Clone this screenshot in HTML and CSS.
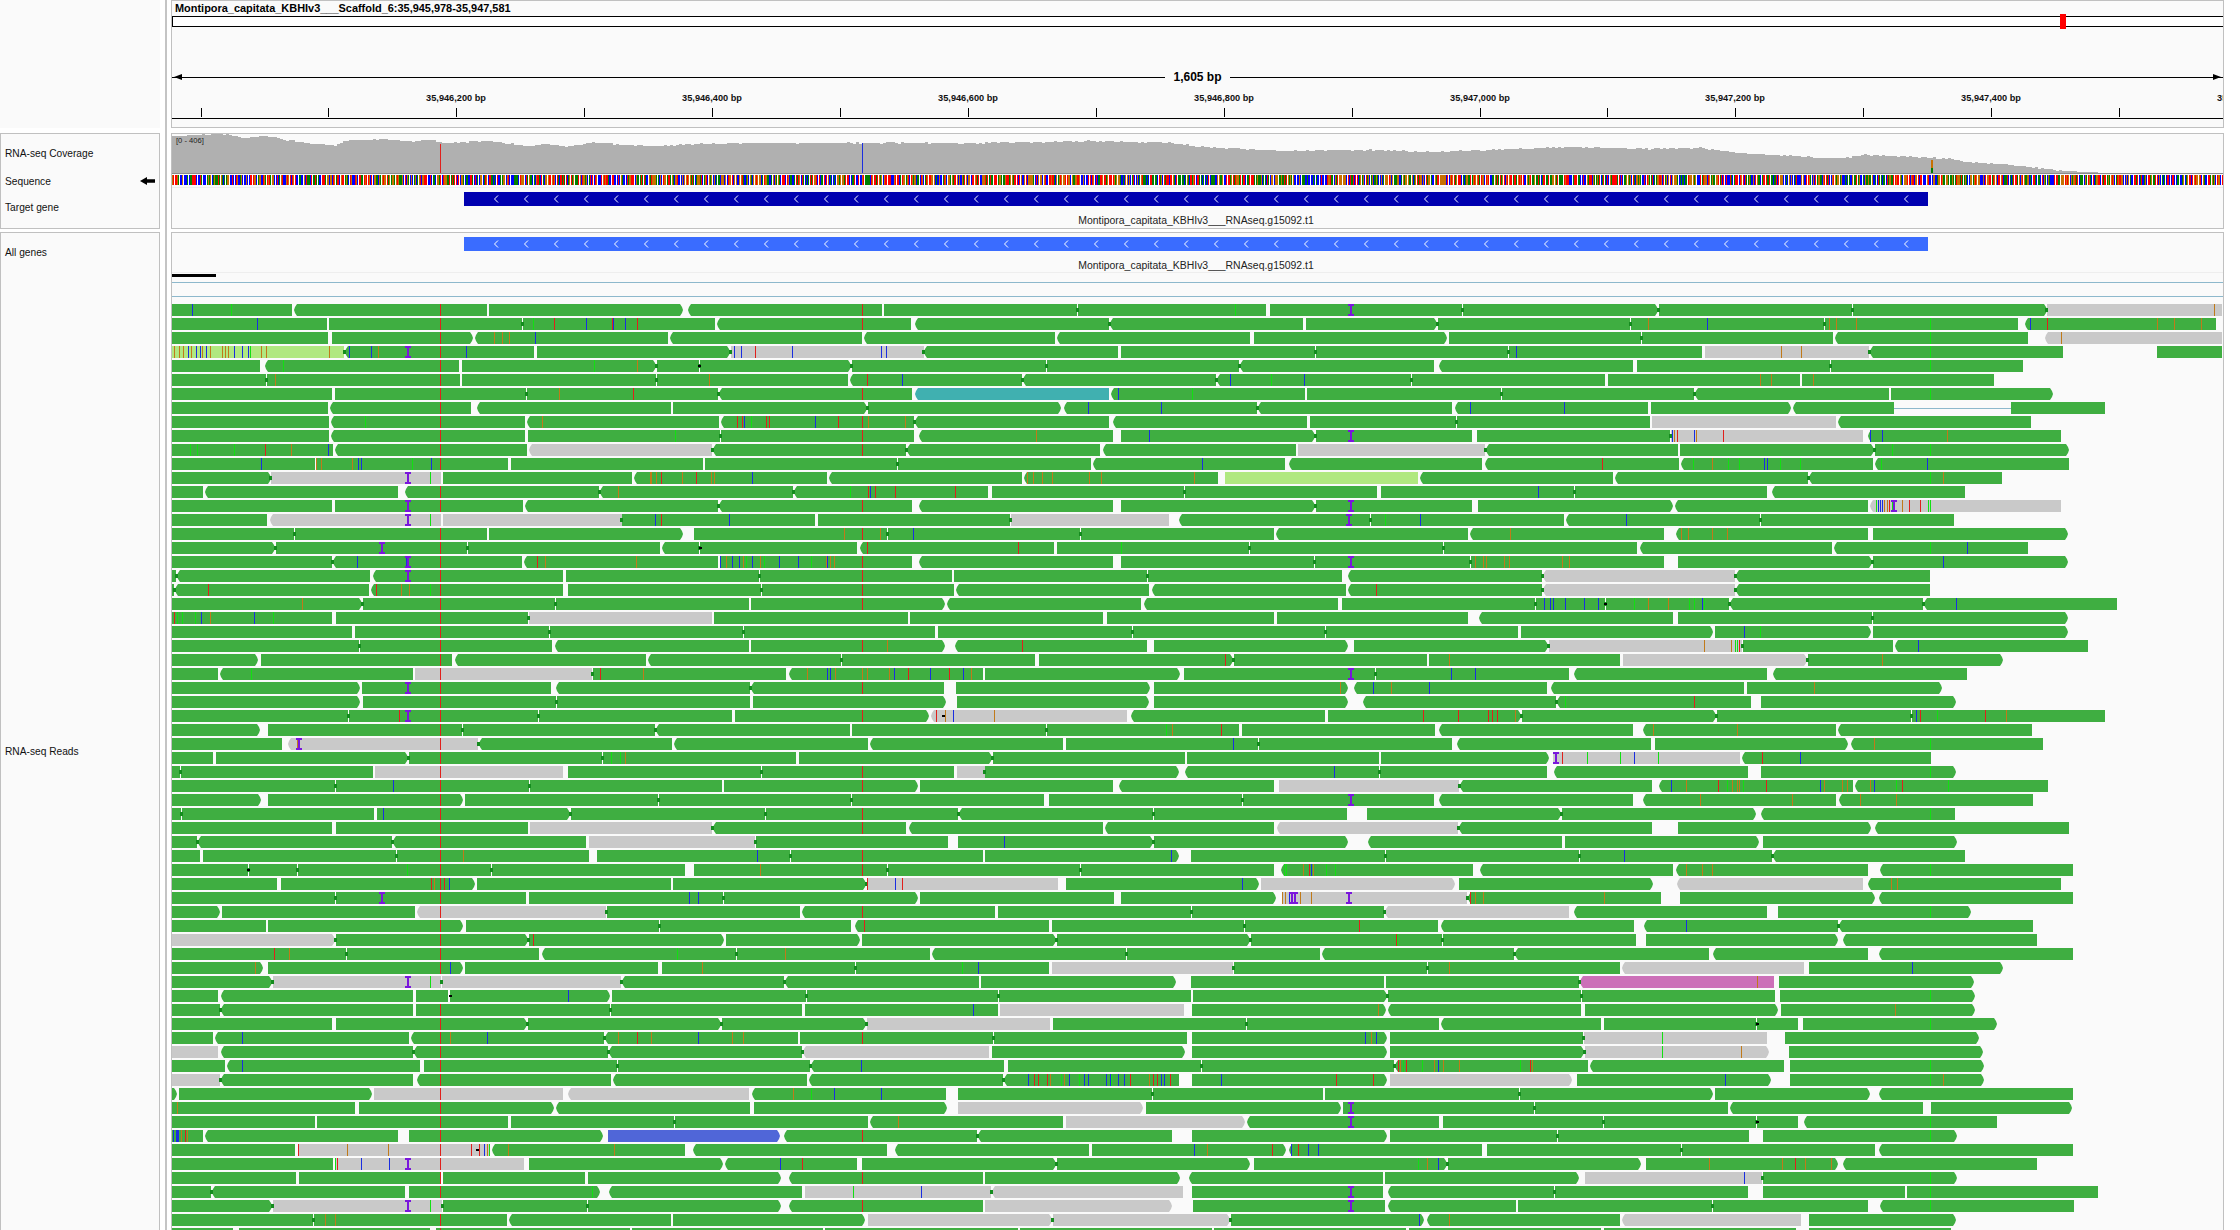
FILE: index.html
```html
<!DOCTYPE html>
<html lang="en">

<head>
    <meta charset="UTF-8">
    <title>IGV</title>
    <link rel="stylesheet" href="styles.css">
</head>

<body>
    <div class="app">
        <div class="names">
            <div class="name-head"></div>
            <div class="name-box track-names">
                <div class="name">RNA-seq Coverage</div>
                <div class="name name-seq">
                    <span>Sequence</span>
                    <svg class="seq-arrow" width="15" height="8" viewBox="0 0 15 8">
                        <path d="M0 4 L7 0 L7 2.3 L15 2.3 L15 5.7 L7 5.7 L7 8 Z" fill="#000" />
                    </svg>
                </div>
                <div class="name">Target gene</div>
            </div>
            <div class="name-box feature-names">
                <div class="name">All genes</div>
                <div class="name name-reads">RNA-seq Reads</div>
            </div>
        </div>

        <div class="divider"></div>

        <div class="panels">
            <div class="panel panel-head">
                <div class="locus">Montipora_capitata_KBHIv3___Scaffold_6:35,945,978-35,947,581</div>
                <div class="ideogram"><div class="cytoband"></div></div>
                <div class="span">
                    <div class="span-line span-left"></div>
                    <div class="span-text">1,605 bp</div>
                    <div class="span-line span-right"></div>
                </div>
                <div class="ruler" id="ruler"></div>
            </div>

            <div class="panel panel-tracks">
                <div class="coverage" id="coverage">
                    <div class="range">[0 - 406]</div>
                </div>
                <div class="coverage-base"></div>
                <div class="sequence" id="sequence"></div>
                <div class="soft-line"></div>
                <div class="gene gene-target">
                    <svg width="1464" height="14">
                        <defs>
                            <pattern id="chevrons" x="29" y="0" width="30" height="14" patternUnits="userSpaceOnUse">
                                <path d="M5 3.5 L1.5 7 L5 10.5" fill="none" stroke="#fff" stroke-width="1" />
                            </pattern>
                        </defs>
                        <rect x="29" y="0" width="1416" height="14" fill="url(#chevrons)" />
                    </svg>
                </div>
                <div class="gene-label">Montipora_capitata_KBHIv3___RNAseq.g15092.t1</div>
            </div>

            <div class="panel panel-reads">
                <div class="gene gene-all">
                    <svg width="1464" height="14">
                        <rect x="29" y="0" width="1416" height="14" fill="url(#chevrons)" />
                    </svg>
                </div>
                <div class="gene-label">Montipora_capitata_KBHIv3___RNAseq.g15092.t1</div>
                <div class="soft-line soft-line-all"></div>
                <div class="scale-bar"></div>
                <div class="blue-line"></div>
                <div class="blue-line blue-line-2"></div>
                <div class="reads" id="reads"></div>
            </div>
        </div>
    </div>
    <script src="reads.js"></script>
</body>

</html>
```

FILE: styles.css
```css
html,
body {
    margin: 0;
    background-color: #fff;
}

body {
    font-family: "Liberation Sans", Arial, sans-serif;
    color: #111;
}

.app {
    display: flex;
    width: 2240px;
    height: 1230px;
    overflow: hidden;
}

/* left column with track names */
.names {
    width: 160px;
    flex: none;
}

.name-head {
    height: 128px;
    margin-bottom: 5px;
    background-color: #fafafa;
}

.name-box {
    box-sizing: border-box;
    border: 1px solid #c0c0c0;
    background-color: #fafafa;
    padding-left: 4px;
}

.track-names {
    height: 96px;
    margin-bottom: 3px;
    padding-top: 13px;
}

.feature-names {
    height: 1100px;
    padding-top: 13px;
}

.name {
    font-size: 10.2px;
    line-height: 14px;
    margin-bottom: 13px;
}

.name-seq {
    display: flex;
    align-items: center;
    justify-content: space-between;
    padding-right: 4px;
}

.name-seq span {
    position: relative;
    top: 1px;
}

.name-reads {
    margin-top: 485px;
}

.divider {
    width: 2px;
    flex: none;
    margin: 0 4px 0 5px;
    background-color: #c4c4c4;
}

/* right column */
.panels {
    width: 2053px;
    flex: none;
}

.panel {
    box-sizing: border-box;
    border: 1px solid #c0c0c0;
    background-color: #fafafa;
}

.panel-head {
    height: 128px;
    margin-bottom: 5px;
}

.panel-tracks {
    height: 96px;
    margin-bottom: 3px;
}

.panel-reads {
    height: 1100px;
    padding-top: 4px;
}

.locus {
    font-size: 10.95px;
    font-weight: bold;
    line-height: 14px;
    padding-left: 3px;
    color: #000;
    white-space: nowrap;
}

.ideogram {
    position: relative;
    height: 9px;
    margin-top: 1px;
    background-color: #fff;
    border-top: 1px solid #000;
    border-bottom: 1px solid #000;
    border-left: 1px solid #000;
}

.cytoband {
    position: absolute;
    left: 1887px;
    top: -3px;
    width: 6px;
    height: 15px;
    background-color: #f00;
}

.span {
    display: flex;
    align-items: center;
    height: 14px;
    margin-top: 43px;
}

.span-line {
    position: relative;
    flex: 1;
    height: 1px;
    background-color: #000;
}

.span-text {
    font-size: 12px;
    font-weight: bold;
    padding: 0 8px;
    color: #000;
}

.span-left::before,
.span-right::after {
    content: "";
    position: absolute;
    top: -3px;
    border-top: 3.5px solid transparent;
    border-bottom: 3.5px solid transparent;
}

.span-left::before {
    left: 2px;
    border-right: 8px solid #000;
}

.span-right::after {
    right: 2px;
    border-left: 8px solid #000;
}

.ruler {
    position: relative;
    height: 26px;
    margin-top: 8px;
    border-bottom: 1px solid #000;
    overflow: hidden;
}

.tick {
    position: absolute;
    bottom: 1px;
    width: 1px;
    height: 9px;
    background-color: #000;
}

.tick-label {
    position: absolute;
    top: 0;
    font-size: 9.2px;
    font-weight: bold;
    line-height: 13px;
    white-space: nowrap;
    color: #111;
    transform: translateX(-50%);
}

/* coverage, sequence */
.coverage {
    position: relative;
    height: 39px;
}

.coverage svg,
.sequence svg {
    display: block;
}

.range {
    position: absolute;
    left: 4px;
    top: 2px;
    z-index: 1;
    font-size: 7.6px;
    line-height: 9px;
    color: #222;
}

.coverage-base {
    height: 1px;
    background-color: #8a8a8a;
}

.sequence {
    height: 10px;
    margin-top: 1px;
    background-color: #fff;
}

.soft-line {
    height: 1px;
    margin-top: 2px;
    background-color: #eee;
}

/* gene tracks */
.gene {
    width: 1464px;
    height: 14px;
    margin-left: 292px;
}

.gene svg {
    display: block;
}

.gene-target {
    margin-top: 4px;
    background-color: #0000b0;
}

.gene-all {
    background-color: #3a6cff;
}

.gene-label {
    width: 1464px;
    margin: 8px 0 0 292px;
    font-size: 10.45px;
    line-height: 14px;
    text-align: center;
    color: #222;
}

.soft-line-all {
    margin-top: -1px;
}

.scale-bar {
    width: 44px;
    height: 3px;
    margin-top: 1px;
    background-color: #000;
}

.blue-line {
    height: 1px;
    margin-top: 5px;
    background-color: #8db8cc;
}

.blue-line-2 {
    margin-top: 13px;
}

/* alignments */
.reads {
    margin-top: 7px;
}

.row {
    position: relative;
    display: flex;
    height: 12px;
    margin-bottom: 2px;
}

.row-line {
    position: absolute;
    top: 6px;
    height: 1px;
    background-color: #8db8cc;
}

.read {
    flex: none;
    height: 12px;
    background-color: #3fae41;
}

.read-left {
    clip-path: polygon(3px 0, 1px 3px, 0 6px, 1px 9px, 3px 12px, 100% 12px, 100% 0);
}

.read-right {
    clip-path: polygon(0 0, calc(100% - 3px) 0, calc(100% - 1px) 3px, 100% 6px, calc(100% - 1px) 9px, calc(100% - 3px) 12px, 0 12px);
}

.read-gray {
    background-color: #c9c9c9;
}

.read-light {
    background-color: #b0e880;
}

.read-teal {
    background-color: #40b0b0;
}

.read-blue {
    background-color: #5066d8;
}

.read-pink {
    background-color: #cc70b8;
}

.mark {
    position: absolute;
    top: 0;
    width: 1px;
    height: 12px;
}

.mark-r {
    background-color: #e0201c;
}

.mark-b {
    background-color: #1a2ee0;
}

.mark-g {
    background-color: #12e012;
}

.mark-o {
    background-color: #c07a1a;
}

/* dark point where two reads touch */
.mark-d {
    top: 4px;
    width: 3px;
    height: 4px;
    margin-left: -2px;
    background-color: #148c1e;
}

/* deletion dot */
.mark-k {
    top: 5px;
    width: 3px;
    height: 2px;
    background-color: #000;
}

/* insertion */
.mark-i {
    width: 6px;
    margin-left: -3px;
    background:
        linear-gradient(#7a16dc, #7a16dc) top / 100% 2px no-repeat,
        linear-gradient(#7a16dc, #7a16dc) bottom / 100% 2px no-repeat,
        linear-gradient(#7a16dc, #7a16dc) center / 2px 100% no-repeat;
}
```

FILE: reads.js
```js
// x positions in the data below are page pixels, the panel content starts at 172
const ORIGIN = 172;
const PANEL_WIDTH = 2051;

const READ_TYPES = { g: "read-gray", l: "read-light", t: "read-teal", u: "read-blue", p: "read-pink" };

// row: [reads, marks]
// read: optional type letter, < or > for the pointed end, start-end
// mark: r b g o mismatch, i insertion, k deletion, then x
const ROWS = [
    ["172-292 <294-487 489-683> <688-882 884-1077 1078-1266 1270-1462 1463-1658> 1659-1852 1853-2047> g2047-2222", "b192 g231 g1235 i1351 o2214"],
    ["172-327 329-522 523-715 <717-911 <915-1109 <1110-1303 1306-1437> 1438-1630 1631-1824 1825-2018 <2025-2216", "b257 g533 r554 b586 r612 b613 b625 r637 o1648 b1707 o1829 o1836 o1856 b2030 r2047 o2157 o2174 o2201"],
    ["172-328 332-473> <475-668 <670-862 <864-1055 <1057-1250 1254-1447> 1449-1641 1642-1833 <1835-2028 g<2045-2222", "o494 o502 o509 b535 o2061"],
    ["l172-344 <345-534 537-730> g731-924 <924-1118 1121-1315 1316-1508 1509-1702 g1705-1869 <1870-2063 2157-2222", "o174 o179 o183 b188 o191 b196 b200 o202 b206 o210 o222 o225 o228 b234 b242 b248 g250 o261 o266 o329 b349 b371 o378 i408 b466 b734 b741 r755 b792 b881 b886 b1516 o1781 o1801"],
    ["172-260 <265-459 462-656> 657-699 700-851> 852-1046 1047-1239 <1240-1434 <1439-1633 1637-1830 1831-2023", "g283 g594 o637 k698"],
    ["172-266 267-460 462-656 657-848 <850-1022 <1023-1216 <1217-1411 1412-1605 1608-1800 1802-1994", "o275 o709 r867 b902 b1230 g1271 b1304 o1760 o1771 o1813"],
    ["172-332 335-526 527-718 <719-912 t<915-1109 <1111-1305 1307-1501 1502-1694 <1695-1889 1891-2053>", "o559 r633 b1118 g1192"],
    ["172-328 <330-471 <477-671 673-867> 868-1061> <1064-1257 <1258-1452 <1455-1648 1651-1791> <1793-1894 2011-2105", "b1088 b1161 b1470 b1564"],
    ["172-329 <331-525 <527-719 <721-914 <915-1109 <1113-1307 1310-1456 1457-1650 g1652-1836 <1838-2031", "g365 o542 r737 r742 b744 g751 r766 r769 b815 r838 o868 o905"],
    ["172-329 <331-525 528-720 721-914 <919-1113 1121-1315> 1316-1472 1477-1670 g1671-1863 <1868-2061", "g675 o1036 b1149 i1351 b1672 o1674 r1677 b1694 o1696 r1723 b1870 b1882 o1947"],
    ["172-333 <335-527 g<529-712 <713-906 <907-1100 <1103-1296 g1298-1485 <1486-1678 1680-1874> 1875-2069>", "g190 g197 g234 r265 o291 b328 g1892"],
    ["172-315 317-508 511-703 705-897 898-1091 <1093-1285 <1289-1482 <1485-1679 <1681-1873 <1875-2069", "b261 o316 o321 o352 b358 b361 g412 b431 b1202 r1602 g1693 o1712 g1728 g1739 b1764 b1767 g1780 g1800 g1881 b1927"],
    ["172-271> g271-441 443-632 <634-827 <829-1022 <1024-1218 l1225-1418 <1420-1613 <1615-1808 <1809-2002", "i408 g430 o650 o651 o656 r661 o682 r696 o711 o714 b752 o1027 o1033 o1042 o1052 o1089 o1101 o1194 o1943"],
    ["172-203 <205-398 <405-599 <600-793 <794-988 992-1184 1185-1377 1381-1574 1575-1767 <1772-1965", "o618 g850 r868 b870 r875 r895 r955 b1538"],
    ["172-332 335-523 <525-718 <719-912 <919-1113 1121-1315> 1316-1472 1478-1673> <1675-1868 g<1870-2061", "i408 i1351 g1876 b1878 b1880 b1882 o1884 o1887 r1889 g1892 i1894 o1902 r1909 r1920 g1928"],
    ["172-267 g<270-441 g443-622 622-815 818-1010 g1011-1169 <1179-1370 1371-1564 <1566-1760 1761-1954", "i408 g430 b655 r661 b729 g1385 b1420 b1626 i1349"],
    ["172-294 295-487 489-683> 694-887 888-1080 1081-1274 <1276-1468 <1470-1664 <1676-1868 1873-2068>", "o844 o880 b913 o1510 o1681 o1688 o1712 o1727"],
    ["172-275> 276-467 468-660 <662-699 700-857 <860-1054 1057-1249 1250-1443 1444-1637 <1640-1832 <1834-2028", "i382 k699 r867 r1018 g1121 b1967"],
    ["172-332 <333-522 <524-718 720-912 <919-1113 1121-1314 1315-1470 1471-1664 1678-1872> 1873-2068>", "b357 b406 i408 r537 o545 o636 b720 o726 b732 b739 o743 g746 b752 o760 g764 b779 b798 g811 o826 b827 o830 o834 i1351 o1475 o1483 o1486 o1504 o1509 o1562 o1569 b1943"],
    ["172-176 <177-370 <373-563 566-759 760-952 954-1147 1148-1342 <1348-1542 g<1543-1735 <1736-1930", "i408"],
    ["172-174 <175-369 <371-563 568-761 762-954 <956-1149 <1152-1346 <1348-1542 g<1543-1735 <1736-1930", "r208 r376 o401 o409 g430 r1376"],
    ["172-362> 363-555 556-749 751-945> <947-1141 <1144-1338 1342-1535 1536-1605 1606-1729 <1730-1923 <1924-2117", "o302 b1544 b1550 b1553 b1565 b1584 b1598 k1604 g1634 o1648 o1668 g1689 g1694 b1702 g1704 b1956"],
    ["172-332 336-528 g529-712 714-908 910-1103 1107-1274 1277-1468 <1479-1673 1678-1872 1873-2068>", "r174 g177 g182 g195 b201 o210 b254 g273"],
    ["172-352 355-549 550-743 744-935 938-1132 1133-1325 1326-1518 1521-1713> 1715-1871> 1873-2068>", "b1744 g1760"],
    ["172-359 360-552 <555-749 751-945> <955-1147 1154-1348> 1354-1548> g1549-1742 1743-1893 <1895-2088", "o887 r1022 o1704 o1731 g1735 g1737 r1739 b1918"],
    ["172-258> 261-452 <455-646 <648-841 842-1035 1039-1233> 1234-1427 1429-1620 g1623-1807> 1808-2003>", "r1225 o1449 o1882"],
    ["172-218 <220-413 g415-592 593-786 <789-983 985-1180> 1184-1375 1376-1569 <1574-1767 <1773-1967", "g251 r600 o643 o807 b827 b830 o835 o862 o867 o889 b894 r908 b930 r949 b963 o971 i1351 b1451 b1475"],
    ["172-360> 362-551 <556-750 <751-944 956-1150> 1154-1348> <1354-1547 <1551-1744 1747-1942>", "i408 o1340 b1373 o1391 b1429 o1814"],
    ["172-360> 363-556 557-750 753-946> 957-1149> 1154-1348> <1363-1556 <1557-1751 1761-1956>", "g1565 r1694"],
    ["172-348 349-538 539-732 735-929> g<931-1127 <1131-1325 1328-1521> 1522-1716> 1717-1911 1912-2105", "r399 i408 r936 k942 o945 b953 o994 r1423 r1458 r1488 r1492 r1497 o1515 b1916 r1920 g1937 r1985 o2006"],
    ["172-260> 268-462 463-655 <656-850 852-1046 1047-1239 1242-1435 <1439-1633 <1643-1836 <1838-2032", "g1166 o1172 r1221 o1653 o1737"],
    ["172-282 g<288-478 <479-672 <674-868 <870-1063 1066-1258 1259-1452 <1457-1651 1655-1848> <1851-2043", "o297 i299 b1233 o1874"],
    ["172-213 216-408> 409-602 603-796 799-992> 993-1185 1187-1379 1381-1549> g1553-1740 <1742-1931", "g611 g620 o625 i1556 r1562 g1587 g1620 b1634 g1658 r1762 b1800"],
    ["172-180 181-373 g375-563 568-761 762-954 g957-985 985-1179> <1185-1379 1380-1547 <1554-1748 1761-1956>", "b1334"],
    ["172-335 336-529 530-722 724-918> 920-1113 <1119-1274 g1279-1459 <1460-1652 <1659-1853 <1855-2048", "b393 b1671 o1686 r1718 g1727 o1732 o1737 o1739 g1743 r1766 b1820 o1824 o1842 o1847 o1870 b1874 g1896 r1902 g1948"],
    ["172-261> 268-463> 465-658 659-851 852-1044 1049-1242 1243-1434 <1439-1633 <1643-1836 <1839-2033", "i1351 o1700 o1792 o1860 o1896"],
    ["172-181 182-374 377-570> 571-765 766-958 <959-1153 1154-1347 1367-1561> 1562-1756> <1761-1955", "b383"],
    ["172-332 336-528 g530-712 <713-906 <909-1103 <1105-1274 g<1277-1458 <1459-1652 1678-1871> <1875-2069", ""],
    ["172-197 <198-392 <393-586 g589-755 756-948 958-1153> 1154-1348> <1368-1562 1565-1759> 1763-1957>", "b1004"],
    ["172-200 203-396 397-589 597-790 791-983 985-1179> 1191-1385 1386-1579 1580-1772 <1773-1965", "o463 b757 b1171 b1624"],
    ["172-248 249-297 298-491 492-685 694-887 888-1080 1081-1274 <1281-1473 <1480-1673 <1676-1868 <1880-2073", "k247 g407 o760 g1284 g1286 o1303 r1309 b1311 o1313 g1326 g1335 o1686 o1702 o1712"],
    ["172-277 281-475> 477-671 673-866> g867-1058 1066-1259> g1261-1455> 1459-1653> g<1677-1863 <1868-2061", "r431 o434 r444 b449 r867 b895 r902 b1242 o1891 o1897"],
    ["172-335 336-526 529-723 724-918> 920-1114 1121-1276> g1282-1467 <1468-1661 1680-1875> <1879-2073", "i382 b689 b698 o1282 o1285 b1289 i1292 i1295 o1300 o1311 i1349 r1470 o1475 o1483 o1604"],
    ["172-220> 222-415 g<417-606 607-800 <802-995 998-1191 1192-1384 g<1385-1569 <1574-1767 1778-1971>", ""],
    ["172-266 268-463> 466-659 660-851 <855-1049 1052-1244 1245-1438 <1441-1634 <1644-1838 <1839-2033", "r864 r1359 b1686"],
    ["g172-335> 336-528> 529-724> 726-860> 862-1056> 1057-1250> 1251-1442 1443-1636 1646-1838> <1843-2037", "r533 r1396 g1397"],
    ["172-346 347-539 <542-736 737-930 <932-1126 1127-1320 <1322-1514 <1515-1709 <1713-1868 <1879-2073", "r274 o289 g677 o785"],
    ["172-263> 268-463> 465-658 662-855 856-1049 g1052-1233 1234-1427 1428-1620 g<1622-1804 1809-2003>", "o255 b450 o702 g962 b978 o1449 b1912"],
    ["172-272> g273-441 g442-621 <622-784 <785-979 981-1176> 1191-1384 1386-1579 p<1580-1774 1779-1974>", "i408 g430 o1757"],
    ["172-218 <221-413 416-448 450-610> 612-806 807-998 999-1191 1193-1387> 1388-1581 1582-1775 1780-1975>", "k449 b568"],
    ["172-220 <221-413 416-610 611-802 805-998 g1000-1184 1192-1386> <1388-1581 1585-1778> 1781-1975>", "b973 o1378 o1895"],
    ["172-332 336-527> 528-721> 722-866> g867-1050 1053-1246 1247-1439 <1441-1601 1604-1756 1757-1798 1803-1997>", "k1756"],
    ["172-213 <215-409 <411-604 <605-798 800-993 994-1187 1192-1387> 1390-1583 g1584-1767 1785-1979>", "b242 o450 b487 o618 r637 o651 b698 o732 o743 b1365 o1371 b1376 g1662"],
    ["g172-218 <221-413 <414-608 <609-802 g<803-989 992-1185> 1192-1387> 1390-1584> g1585-1769> 1789-1983>", "g1662 o1741"],
    ["172-225 <227-420 424-617 618-810 <811-1004 1008-1201 1202-1394 <1395-1588 <1590-1784 1790-1984>", "b242 b861 r1398 o1400 g1403 r1406 g1422 o1434 b1438 o1443 o1459 g1520 r1530 o1532"],
    ["g172-220 <221-413 <417-611 <613-807 <809-1003 <1004-1179 1192-1387> g1390-1572> 1577-1771> 1790-1984>", "b1028 r1034 r1038 r1047 o1050 g1061 o1064 b1069 g1079 b1084 b1088 b1106 b1110 g1111 b1118 b1124 r1130 o1149 r1153 r1157 b1161 b1164 r1170 b1221 r1336 r1373 b1725 o1943"],
    ["172-177> 179-372> g374-563 g<568-749 <752-946 958-1152 1153-1323 1325-1519 1520-1713> 1715-1870> <1879-2073", "o793 g811 b834 b881"],
    ["172-355 359-554> <556-750 754-947> g958-1143> 1146-1341> 1343-1534 1535-1728 <1730-1923 1931-2072>", "o177 i1351"],
    ["172-315 317-508 511-674 675-868 <870-1063 g1066-1245> <1247-1439 1443-1603 1604-1756 1757-1798 <1804-1997", "o898 i1351 k1756"],
    ["172-203 <205-398 409-603> u608-780> <784-977 <978-1172 1192-1387> 1390-1557 1558-1749 1763-1957>", "b173 b176 b177 b178 o181 r185 o187"],
    ["172-295 g298-490 <492-685 <693-887 <895-1089 1092-1286> <1289-1482 1487-1681 1682-1875 <1879-2073", "r298 o347 o388 r471 k476 r479 b484 o487 g489 o508 o614 b1194 o1207 r1272 b1291 r1298 b1308 b1318"],
    ["172-333 g336-524 529-723> <725-857 862-1056> 1057-1250> 1254-1447> 1448-1641> 1646-1838> <1843-2037", "g335 r337 b361 b389 i408 b780 r802 g1418 o1427 b1438 o1709 o1782 r1795 o1805 o1831"],
    ["172-296 299-441 443-585 588-781> <789-983 985-1180> <1189-1383 1385-1579> g1585-1762 1763-1957>", "b1744"],
    ["172-211 <212-405 409-600> <609-802 g805-991 g<992-1183 1192-1383 <1388-1554 1555-1748 1763-1905 1907-2098", "g592 g853 b921 i1351"],
    ["172-272> g273-442 443-587 588-781> <789-983 g985-1172> 1193-1385 <1388-1516 1518-1712 1713-1868 <1880-2074", "i408 g430 i1351"],
    ["172-313 314-507 <509-671 673-865> g868-1052> g1053-1230> 1231-1424> <1427-1620 g<1622-1801 1809-1956>", "o325 o335 b1419 o1449"],
    ["172-233 239-430 436-630 632-823 825-1018 1020-1212 1214-1406 1409-1601 1604-1796 1809-1951", ""]
];

// mismatches shared by many reads at the same base
const NO_RED_440 = [12, 15, 48, 49, 64];
const RED_862 = [0, 1, 6, 8, 9, 10, 14, 16, 18, 19, 20, 21, 24, 27, 29, 33, 34, 36, 37, 39, 40, 43, 52, 59, 62, 64];
const GREEN_1930 = [1, 2, 3, 4, 6, 10, 12, 14, 17, 31, 33, 36, 40, 43, 49, 51, 54, 55, 58, 59, 62, 63, 64];

const readsEl = document.getElementById("reads");

function addMark(row, kind, x) {
    const mark = document.createElement("div");
    mark.className = "mark mark-" + kind;
    mark.style.left = (x - ORIGIN) + "px";
    row.appendChild(mark);
}

ROWS.forEach(function (data, index) {
    const row = document.createElement("div");
    row.className = "row";

    let last = ORIGIN;
    const spans = [];
    data[0].split(" ").forEach(function (token) {
        const m = token.match(/^([gltup]?)(<?)(\d+)-(\d+)(>?)$/);
        const start = parseInt(m[3]);
        const end = parseInt(m[4]);
        const read = document.createElement("div");
        read.className = "read";
        if (m[1]) read.classList.add(READ_TYPES[m[1]]);
        if (m[2]) read.classList.add("read-left");
        if (m[5]) read.classList.add("read-right");
        read.style.marginLeft = (start - last) + "px";
        read.style.width = (end - start) + "px";
        row.appendChild(read);
        spans.push([start, end]);
        last = end;
    });

    // spliced read in row 7 has a thin line over the intron
    if (index === 7) {
        const line = document.createElement("div");
        line.className = "row-line";
        line.style.left = (1894 - ORIGIN) + "px";
        line.style.width = (2011 - 1894) + "px";
        row.appendChild(line);
    }

    for (let i = 1; i < spans.length; i++) {
        if (spans[i][0] - spans[i - 1][1] <= 1) {
            addMark(row, "d", spans[i][0]);
        }
    }

    const covered = function (x) {
        return spans.some(function (s) { return x >= s[0] && x < s[1]; });
    };
    if (NO_RED_440.indexOf(index) < 0 && covered(440)) addMark(row, "r", 440);
    if (RED_862.indexOf(index) >= 0 && covered(862)) addMark(row, "r", 862);
    if (GREEN_1930.indexOf(index) >= 0 && covered(1930)) addMark(row, "g", 1930);

    if (data[1]) {
        data[1].split(" ").forEach(function (token) {
            addMark(row, token[0], parseInt(token.slice(1)));
        });
    }
    readsEl.appendChild(row);
});

// ruler
const ruler = document.getElementById("ruler");
const TICK_STEP = 127.9;
for (let k = 0; k <= 16; k++) {
    const x = 200.5 + k * TICK_STEP - ORIGIN;
    if (x < PANEL_WIDTH) {
        const tick = document.createElement("div");
        tick.className = "tick";
        tick.style.left = Math.round(x) + "px";
        ruler.appendChild(tick);
    }
    if (k >= 2 && k % 2 === 0) {
        const bp = 35946200 + (k - 2) * 100;
        const label = document.createElement("div");
        label.className = "tick-label";
        label.style.left = Math.round(x) + "px";
        label.textContent = bp.toLocaleString("en-US") + " bp";
        ruler.appendChild(label);
    }
}

// small repeatable random numbers for the coverage edge and the bases
let seed = 20240611;
function rand() {
    seed = (seed * 1664525 + 1013904223) % 4294967296;
    return seed / 4294967296;
}

// coverage outline: [x, y] in page pixels
const EDGE = [
    [172, 136], [223, 134], [241, 138], [263, 136], [304, 143], [335, 145], [344, 141], [384, 139], [411, 142],
    [429, 139], [440, 143], [487, 141], [527, 146], [549, 144], [567, 147], [589, 142], [625, 145], [656, 146],
    [683, 145], [714, 143], [857, 143], [1000, 143], [1086, 141], [1171, 143], [1200, 147], [1286, 151], [1371, 150],
    [1428, 152], [1571, 147], [1650, 149], [1700, 148], [1728, 152], [1755, 154], [1797, 156], [1817, 158],
    [1845, 158], [1862, 155], [1914, 157], [1952, 159], [1965, 162], [2000, 164], [2028, 167], [2062, 171],
    [2091, 172], [2100, 173], [2223, 173]
];
function edgeAt(x) {
    for (let i = 1; i < EDGE.length; i++) {
        if (x <= EDGE[i][0]) {
            const t = (x - EDGE[i - 1][0]) / (EDGE[i][0] - EDGE[i - 1][0]);
            return EDGE[i - 1][1] + t * (EDGE[i][1] - EDGE[i - 1][1]);
        }
    }
    return 173;
}
const SVG_NS = "http://www.w3.org/2000/svg";
function svgEl(name, attrs) {
    const el = document.createElementNS(SVG_NS, name);
    Object.keys(attrs).forEach(function (key) { el.setAttribute(key, attrs[key]); });
    return el;
}

const covSvg = svgEl("svg", { width: PANEL_WIDTH, height: 39, "shape-rendering": "crispEdges" });
let points = "0,39";
for (let x = 172; x < 2110; x += 3) {
    const y = Math.round(edgeAt(x) + (x < 2060 ? rand() * 1.4 - 0.7 : 0)) - 134;
    points += " " + (x - ORIGIN) + "," + y + " " + (x - ORIGIN + 3) + "," + y;
}
points += " " + (2110 - ORIGIN) + ",39";
covSvg.appendChild(svgEl("polygon", { points: points, fill: "#b0b0b0" }));
covSvg.appendChild(svgEl("rect", { x: 440 - ORIGIN, y: 10, width: 1, height: 29, fill: "#e0201c" }));
covSvg.appendChild(svgEl("rect", { x: 862 - ORIGIN, y: 9, width: 1, height: 30, fill: "#1a2ee0" }));
covSvg.appendChild(svgEl("rect", { x: 1931 - ORIGIN, y: 26, width: 2, height: 8, fill: "#c87000" }));
covSvg.appendChild(svgEl("rect", { x: 1931 - ORIGIN, y: 34, width: 2, height: 5, fill: "#008000" }));
document.getElementById("coverage").appendChild(covSvg);

// reference bases
const BASES = ["#008000", "#0000ff", "#c87000", "#ff0000"];
const BP_WIDTH = PANEL_WIDTH / 1605;
const seqSvg = svgEl("svg", { width: PANEL_WIDTH, height: 10, "shape-rendering": "crispEdges" });
for (let i = 0; i < 1605; i++) {
    seqSvg.appendChild(svgEl("rect", {
        x: (i * BP_WIDTH).toFixed(2),
        y: 0,
        width: 1.05,
        height: 10,
        fill: BASES[Math.floor(rand() * 4)]
    }));
}
document.getElementById("sequence").appendChild(seqSvg);
```
